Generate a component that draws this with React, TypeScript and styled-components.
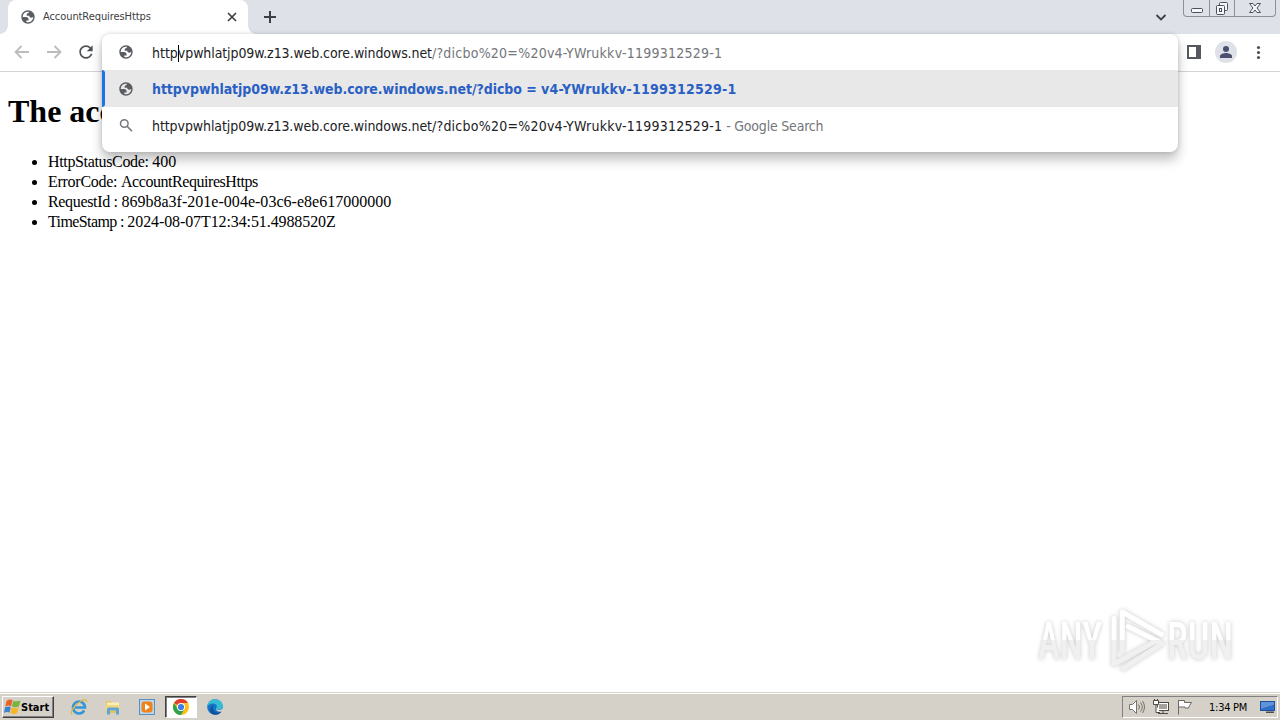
import React from 'react';
import styled, { createGlobalStyle } from 'styled-components';

interface ITextProps {
    $spacing?: number;
}

const GlobalStyle = createGlobalStyle`
    * {
        box-sizing: border-box;
    }

    body {
        margin: 0;
        background: #fff;
        overflow: hidden;
    }
`;

const Desktop = styled.div`
    position: relative;
    width: 1280px;
    height: 720px;
    display: flex;
    flex-direction: column;
    overflow: hidden;
    font-family: 'DejaVu Sans Condensed', 'DejaVu Sans', sans-serif;
    font-stretch: condensed;
`;

const TabStrip = styled.div`
    height: 34px;
    display: flex;
    background: #dee1e8;
    padding-left: 8px;
    flex: none;
`;

const Tab = styled.div`
    position: relative;
    width: 240px;
    height: 34px;
    display: flex;
    align-items: center;
    padding: 0 9px 0 12px;
    background: #fff;
    border-radius: 8px 8px 0 0;

    &::before,
    &::after {
        content: '';
        position: absolute;
        bottom: 0;
        width: 8px;
        height: 8px;
    }

    &::before {
        left: -8px;
        background: radial-gradient(circle at 0 0, #dee1e8 7.5px, #fff 8px);
    }

    &::after {
        right: -8px;
        background: radial-gradient(circle at 100% 0, #dee1e8 7.5px, #fff 8px);
    }
`;

const TabTitle = styled.span<ITextProps>`
    flex: 1;
    margin-left: 7px;
    font-size: 11px;
    line-height: 14px;
    letter-spacing: ${({ $spacing }) => $spacing || 0}px;
    color: #3c4043;
`;

const NewTab = styled.div`
    width: 44px;
    display: flex;
    align-items: center;
    justify-content: center;
`;

const StripSpacer = styled.div`
    flex: 1;
`;

const TabSearch = styled.div`
    width: 44px;
    display: flex;
    align-items: center;
    justify-content: center;
`;

const WindowControls = styled.div`
    width: 93px;
    height: 17px;
    display: flex;
    margin-right: 4px;
    border: 1px solid #8c909a;
    border-top: none;
    border-radius: 0 0 4px 4px;
    overflow: hidden;
`;

const WindowButton = styled.div<{ $width: number }>`
    width: ${({ $width }) => $width}px;
    display: flex;
    align-items: center;
    justify-content: center;

    & + & {
        border-left: 1px solid #8c909a;
    }
`;

const Toolbar = styled.div`
    position: relative;
    height: 38px;
    flex: none;
    display: flex;
    align-items: center;
    background: #fff;
    border-bottom: 1px solid #d3d5d9;
    padding: 0 12px 1px 12px;
`;

const NavButtons = styled.div`
    display: flex;
    gap: 12px;
    flex: 1;
`;

const ToolbarActions = styled.div`
    display: flex;
    align-items: center;
    gap: 11px;
`;

const Avatar = styled.div`
    width: 22px;
    height: 22px;
    margin-left: 3px;
    border-radius: 50%;
    display: flex;
    align-items: center;
    justify-content: center;
    background: #dee1e8;
`;

const Omnibox = styled.div`
    position: absolute;
    z-index: 2;
    top: 0;
    left: 102px;
    width: 1076px;
    height: 118px;
    background: #fff;
    border-radius: 8px;
    box-shadow: 0 8px 12px rgba(0, 0, 0, 0.24), 0 0 4px rgba(0, 0, 0, 0.16);
`;

const Suggestion = styled.div<{ $selected?: boolean; $height: number }>`
    height: ${({ $height }) => $height}px;
    display: flex;
    align-items: center;
    position: relative;
    padding-left: 16px;
    background: ${({ $selected }) => ($selected ? '#e8e8e8' : 'transparent')};

    &::before {
        content: '';
        display: ${({ $selected }) => ($selected ? 'block' : 'none')};
        position: absolute;
        left: 0;
        top: 0;
        width: 3px;
        height: 100%;
        background: #1a73e8;
        border-radius: 0 3px 3px 0;
    }
`;

const SuggestionText = styled.div<{ $bold?: boolean }>`
    margin-left: 18px;
    font-size: 14px;
    line-height: 18px;
    white-space: pre;
    font-weight: ${({ $bold }) => ($bold ? 'bold' : 'normal')};
    color: ${({ $bold }) => ($bold ? '#2a60c4' : '#202124')};
`;

const TypedText = styled(SuggestionText)`
    padding-top: 2px;
`;

const Part = styled.span<ITextProps & { $dim?: boolean }>`
    letter-spacing: ${({ $spacing }) => $spacing || 0}px;
    color: ${({ $dim }) => ($dim ? '#73767a' : 'inherit')};
`;

const Caret = styled.span`
    display: inline-block;
    width: 1px;
    height: 17px;
    margin-right: -1px;
    vertical-align: -4px;
    background: #000;
`;

const Page = styled.main`
    flex: 1;
    padding: 0 8px;
    background: #fff;
    font-family: 'Liberation Serif', 'Times New Roman', serif;
    color: #000;
`;

const Title = styled.h1`
    margin: 21px 0 22px;
    font-size: 32px;
    line-height: 37px;
    white-space: nowrap;
`;

const ErrorList = styled.ul`
    margin: 0;
    padding-left: 40px;
    font-size: 16px;
    line-height: 20px;
`;

const Watermark = styled.svg`
    position: absolute;
    left: 1030px;
    top: 600px;
    filter: drop-shadow(0 0 2px rgba(0, 0, 0, 0.22));
`;

const Taskbar = styled.footer`
    height: 28px;
    flex: none;
    display: flex;
    align-items: center;
    padding: 1px 2px 0 2px;
    background: #d5d0c8;
    border-top: 1px solid #d5d0c8;
    box-shadow: inset 0 1px 0 #fff;
`;

const StartButton = styled.div`
    width: 52px;
    height: 22px;
    display: flex;
    align-items: center;
    padding-left: 1px;
    border: 1px solid;
    border-color: #fff #404040 #404040 #fff;
    box-shadow: inset -1px -1px 0 #808080;
    font-size: 11px;
    font-weight: bold;
    color: #000;
`;

const QuickLaunch = styled.div`
    display: flex;
    flex: 1;
    margin-left: 9px;
`;

const TaskButton = styled.div<{ $active?: boolean }>`
    width: 32px;
    height: 22px;
    margin-right: 2px;
    display: flex;
    align-items: center;
    justify-content: center;
    border: 1px solid transparent;
    ${({ $active }) => $active && `
        background: #fff;
        border-color: #404040 #fff #fff #404040;
        box-shadow: inset 1px 1px 0 #808080;
    `}
`;

const Tray = styled.div`
    width: 156px;
    height: 22px;
    display: flex;
    align-items: center;
    padding-left: 5px;
    border: 1px solid;
    border-color: #808080 #fff #fff #808080;
`;

const TrayIcons = styled.div`
    display: flex;
    gap: 6px;
`;

const Clock = styled.span`
    width: 39px;
    margin: 0 12px 0 15px;
    font-size: 11px;
    letter-spacing: -0.25px;
    white-space: nowrap;
    color: #000;
`;

const GlobeIcon = () => (
    <svg width='16' height='16' viewBox='0 0 24 24'>
        <path
            fill='#5a5d61'
            fillRule='evenodd'
            d='M12 2C6.48 2 2 6.48 2 12s4.48 10 10 10 10-4.48 10-10S17.52 2 12 2zM4 12h4.4c3.407.022 4.922 1.73 4.543 5.127H9.488v2.47a8.004 8.004 0 0 0 10.498-8.083C19.327 12.504 18.332 13 17 13c-2.137 0-3.206-.916-3.206-2.75h-3.748c-.274-2.728.683-4.092 2.87-4.092 0-.975.327-1.597.811-1.97A8.004 8.004 0 0 0 4 12z'
        />
    </svg>
);

const ArrowIcon = ({ forward }: { forward?: boolean }) => (
    <svg width='20' height='20' viewBox='0 0 20 20' fill='none' stroke='#babcbe' strokeWidth='1.8'>
        <path d={forward ? 'M3 10h13M10.5 4l6 6-6 6' : 'M17 10H4M9.5 4l-6 6 6 6'} />
    </svg>
);

const ReloadIcon = () => (
    <svg width='20' height='20' viewBox='0 0 24 24' fill='#4d5054'>
        <path d='M17.65 6.35C16.2 4.9 14.21 4 12 4c-4.42 0-7.99 3.58-7.99 8s3.57 8 7.99 8c3.73 0 6.84-2.55 7.73-6h-2.08c-.82 2.33-3.04 4-5.65 4-3.31 0-6-2.69-6-6s2.69-6 6-6c1.66 0 3.14.69 4.22 1.78L13 11h7V4l-2.35 2.35z' />
    </svg>
);

const SearchIcon = () => (
    <svg width='16' height='16' viewBox='0 0 16 16' fill='none' stroke='#74777b' strokeWidth='1.5'>
        <circle cx='6.3' cy='5.5' r='3.8' />
        <path d='M9.2 8.4l4.8 4.8' />
    </svg>
);

const SpeakerIcon = () => (
    <svg width='18' height='16' viewBox='0 0 18 16' fill='none' stroke='#77736d'>
        <path d='M1.5 5.5h3l4-4v13l-4-4h-3z' fill='#fff' />
        <path d='M10.5 5.500q2 2.500 0 5M12.500 3.500q3.500 4.500 0 9M14.500 2q4 6 0 12' />
    </svg>
);

const NetworkIcon = () => (
    <svg width='18' height='16' viewBox='0 0 18 16' fill='#fff' stroke='#4e4b46'>
        <rect x='5.5' y='3.5' width='11' height='8' />
        <rect x='7' y='5' width='8' height='5' fill='#a5a19a' stroke='none' />
        <path d='M6 14.5h10M11 12v2' />
        <path d='M1.5 1.5h5v4h-5zM2.5 0v2M5.5 0v2M4 5.500v8h4' />
    </svg>
);

const FlagIcon = () => (
    <svg width='18' height='16' viewBox='0 0 18 16' fill='#fff' stroke='#6b6863'>
        <path d='M2.5 1v14.5M2.5 1.5h6v2h7l-2 3-1 2.500H9v-1H2.500z' />
    </svg>
);

const MonitorIcon = () => (
    <svg width='16' height='14' viewBox='0 0 16 14'>
        <path d='M0 1h15v10H0z' fill='#1d4f9e' />
        <path d='M1 2h13v3L1 9z' fill='#5f93da' />
        <path d='M1 9l13-4v5H1z' fill='#2e6fc7' />
        <path d='M6 11.500h8v1.500H6z' fill='#494b55' />
    </svg>
);

const WindowsLogo = () => (
    <svg width='17' height='18' viewBox='0 0 16 16'>
        <path d='M2.500 2q3-2 5.500-.5L6.700 7.200Q4 6 1.200 7.500z' fill='#e8622a' />
        <path d='M8.700 2Q11 3.300 15.500 1.800L14 7.500Q10 9 7.500 7.500z' fill='#79b53c' />
        <path d='M1 8.300Q4 7 6.400 8l-1.200 5.200Q3 12 0 13.500z' fill='#3c82cf' />
        <path d='M7.300 8.300q3 1.700 6.500.2l-1.400 5.300Q9 15.300 6 13.800z' fill='#f5b824' />
    </svg>
);

const ExplorerIcon = () => (
    <svg width='18' height='18' viewBox='0 0 18 18' fill='none'>
        <path d='M14.200 12.500A6 6 0 1 1 15 9.500H5' stroke='#3396d8' strokeWidth='2.600' />
        <path d='M2 16.500C-.5 14 5 6 12 2.500c3-1.500 5-1 4.500 1.500' stroke='#e4b53b' strokeWidth='1.300' />
    </svg>
);

const FolderIcon = () => (
    <svg width='18' height='18' viewBox='0 0 18 18'>
        <path d='M2 3h5l1.500 2H15v10H2z' fill='#e3c363' />
        <path d='M3 4.500h12v3H3z' fill='#faf0b5' />
        <path d='M1.500 7h14v6h-14z' fill='#f0d87e' />
        <path d='M3 16v-5q0-1.500 1.500-1.500h9q1.500 0 1.500 1.500v5.500h-3V12.500H6V16.500H3z' fill='#5fa5d6' />
    </svg>
);

const PlayerIcon = () => (
    <svg width='18' height='18' viewBox='0 0 18 18'>
        <rect x='1.5' y='1.5' width='15' height='15' fill='#b9d6ee' stroke='#5c91bf' />
        <rect x='3.5' y='3.5' width='11' height='11' rx='3' fill='#ef8219' />
        <path d='M7 5.500l5 3.500-5 3.500z' fill='#fff' />
    </svg>
);

const ChromeIcon = () => (
    <svg width='16' height='16' viewBox='0 0 16 16'>
        <circle cx='8' cy='8' r='8' fill='#fbc116' />
        <path d='M8 8L1.070 4A8 8 0 0 1 14.930 4H8z' fill='#e33b2e' />
        <path d='M1.070 4A8 8 0 0 0 8 16l3.460-6L8 8 4.540 10z' fill='#2da14c' />
        <circle cx='8' cy='8' r='4' fill='#fff' />
        <circle cx='8' cy='8' r='3.1' fill='#3f7de8' />
    </svg>
);

const EdgeIcon = () => (
    <svg width='16' height='16' viewBox='0 0 16 16'>
        <circle cx='8' cy='8' r='7.8' fill='#1673c6' />
        <path d='M.2 8C.5 3 4 .2 8 .2c4.500 0 7.800 3 7.800 6.500 0 2.500-2 4-4.300 4-1.500 0-2.500-.7-2.500-1.300 0-.7.800-1 .8-2.200C9.800 5.500 8 4.500 6 4.500 3 4.500.8 6 .2 8z' fill='#36bdd3' />
        <path d='M6.500 6.500c-2 3 .2 7 4.500 7 1.500 0 3-.5 4-1.500-2 3.500-6.500 4.700-10 2.800C2 12.500 3 8 6.500 6.500z' fill='#0f519b' />
        <path d='M9 9.500c0 1 1.500 1.700 3 1.500 1.500-.1 3-.8 3.800-2v3c-3 1.500-7.300.5-6.800-2.500z' fill='#d5d0c8' />
    </svg>
);

const WatermarkLogo = () => (
    <Watermark width='220' height='80' viewBox='0 0 220 80'>
        <defs>
            <linearGradient id='fade' x1='0' y1='0' x2='0' y2='80' gradientUnits='userSpaceOnUse'>
                <stop offset='0.5' stopColor='#ffffff' />
                <stop offset='0.5' stopColor='#f0f0f0' />
            </linearGradient>
        </defs>
        <g fill='url(#fade)' fontFamily='Roboto, sans-serif' fontSize='51' fontWeight='500'>
            <text x='8' y='59' textLength='64' lengthAdjust='spacingAndGlyphs'>ANY</text>
            <text x='137' y='59' textLength='66' lengthAdjust='spacingAndGlyphs'>RUN</text>
        </g>
        <g fill='none' stroke='url(#fade)' strokeWidth='5' strokeLinecap='round' strokeLinejoin='round'>
            <path d='M92.300 50V12L131.500 34.500' />
            <path d='M84 18.500V64L127 40.500' />
            <path d='M93 68.500L132 43.500 98 26.500' />
        </g>
    </Watermark>
);

const errorDetails = [
    { label: 'HttpStatusCode: ', labelSpacing: -0.35, value: '400', valueSpacing: 0 },
    { label: 'ErrorCode: ', labelSpacing: -0.27, value: 'AccountRequiresHttps', valueSpacing: -0.45 },
    { label: 'RequestId : ', labelSpacing: -0.33, value: '869b8a3f-201e-004e-03c6-e8e617000000', valueSpacing: 0.02 },
    { label: 'TimeStamp : ', labelSpacing: -0.6, value: '2024-08-07T12:34:51.4988520Z', valueSpacing: -0.1 },
];

const App: React.FC = () => {
    return (
        <>
            <GlobalStyle />
            <Desktop>
                <TabStrip>
                    <Tab>
                        <GlobeIcon />
                        <TabTitle $spacing={-0.08}>AccountRequiresHttps</TabTitle>
                        <svg width='14' height='14' viewBox='0 0 14 14' stroke='#3c4043' strokeWidth='1.7'>
                            <path d='M3 3l8 8M11 3l-8 8' />
                        </svg>
                    </Tab>
                    <NewTab>
                        <svg width='14' height='14' viewBox='0 0 14 14' stroke='#3c4043' strokeWidth='2'>
                            <path d='M1 7h12M7 1v12' />
                        </svg>
                    </NewTab>
                    <StripSpacer />
                    <TabSearch>
                        <svg width='12' height='12' viewBox='0 0 12 12' fill='none' stroke='#3c4043' strokeWidth='1.8'>
                            <path d='M1.5 4L6 8.5 10.5 4' />
                        </svg>
                    </TabSearch>
                    <WindowControls>
                        <WindowButton $width={25}>
                            <svg width='14' height='16' viewBox='0 0 14 16' fill='#f5f6f8' stroke='#4c505c'>
                                <rect x='1.5' y='8.5' width='11' height='4' rx='1' />
                            </svg>
                        </WindowButton>
                        <WindowButton $width={25}>
                            <svg width='14' height='16' viewBox='0 0 14 16' fill='#f5f6f8' stroke='#4c505c'>
                                <rect x='4.5' y='2.5' width='8' height='8' rx='1' />
                                <rect x='1.5' y='5.5' width='8' height='9' rx='1' />
                                <rect x='4.5' y='8.5' width='2' height='3' />
                            </svg>
                        </WindowButton>
                        <WindowButton $width={41}>
                            <svg width='14' height='16' viewBox='0 0 14 16' fill='#f5f6f8' stroke='#4c505c'>
                                <path d='M1.5 3.5h3.5l2 2.500 2-2.500h3.500L9 8l3.500 4.500H9L7 10l-2 2.500H1.500L5 8z' />
                            </svg>
                        </WindowButton>
                    </WindowControls>
                </TabStrip>

                <Toolbar>
                    <NavButtons>
                        <ArrowIcon />
                        <ArrowIcon forward />
                        <ReloadIcon />
                    </NavButtons>
                    <ToolbarActions>
                        <svg width='14' height='14' viewBox='0 0 14 14'>
                            <path d='M0 0h14v14H0zM2 2v10h7V2z' fill='#55585c' fillRule='evenodd' />
                        </svg>
                        <Avatar>
                            <svg width='14' height='14' viewBox='0 0 14 14' fill='#4a5070'>
                                <circle cx='7' cy='4' r='3' />
                                <path d='M1 13v-2c0-2 4-3 6-3s6 1 6 3v2z' />
                            </svg>
                        </Avatar>
                        <svg width='20' height='16' viewBox='0 0 20 16' fill='#4d5054'>
                            <circle cx='10.5' cy='3.5' r='1.6' />
                            <circle cx='10.5' cy='8.5' r='1.6' />
                            <circle cx='10.5' cy='13.5' r='1.6' />
                        </svg>
                    </ToolbarActions>

                    <Omnibox>
                        <Suggestion $height={36}>
                            <GlobeIcon />
                            <TypedText>
                                <Part>http</Part>
                                <Caret />
                                <Part $spacing={-0.09}>vpwhlatjp09w.z13.web.core.windows.net</Part>
                                <Part $spacing={0.24} $dim>/?dicbo%20=%20v4-YWrukkv-1199312529-1</Part>
                            </TypedText>
                        </Suggestion>
                        <Suggestion $height={37} $selected>
                            <GlobeIcon />
                            <SuggestionText $bold>
                                <Part $spacing={-0.06}>httpvpwhlatjp09w.z13.web.core.windows.net/?dicbo = </Part>
                                <Part $spacing={0.24}>v4-YWrukkv-1199312529-1</Part>
                            </SuggestionText>
                        </Suggestion>
                        <Suggestion $height={37}>
                            <SearchIcon />
                            <SuggestionText>
                                <Part $spacing={-0.08}>httpvpwhlatjp09w.z13.web.core.windows.net</Part>
                                <Part $spacing={0.24}>/?dicbo%20=%20v4-YWrukkv-1199312529-1</Part>
                                <Part $spacing={-0.2} $dim> - Google Search</Part>
                            </SuggestionText>
                        </Suggestion>
                    </Omnibox>
                </Toolbar>

                <Page>
                    <Title>The acc</Title>
                    <ErrorList>
                        {errorDetails.map(({ label, labelSpacing, value, valueSpacing }) => (
                            <li key={label}>
                                <Part $spacing={labelSpacing}>{label}</Part>
                                <Part $spacing={valueSpacing}>{value}</Part>
                            </li>
                        ))}
                    </ErrorList>
                </Page>

                <Taskbar>
                    <StartButton>
                        <WindowsLogo />
                        Start
                    </StartButton>
                    <QuickLaunch>
                        <TaskButton><ExplorerIcon /></TaskButton>
                        <TaskButton><FolderIcon /></TaskButton>
                        <TaskButton><PlayerIcon /></TaskButton>
                        <TaskButton $active><ChromeIcon /></TaskButton>
                        <TaskButton><EdgeIcon /></TaskButton>
                    </QuickLaunch>
                    <Tray>
                        <TrayIcons>
                            <SpeakerIcon />
                            <NetworkIcon />
                            <FlagIcon />
                        </TrayIcons>
                        <Clock>1:34 PM</Clock>
                        <MonitorIcon />
                    </Tray>
                </Taskbar>

                <WatermarkLogo />
            </Desktop>
        </>
    );
};

export default App;
